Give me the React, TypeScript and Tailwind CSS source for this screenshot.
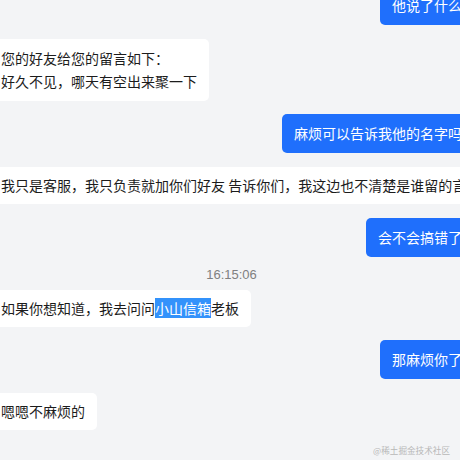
import React from "react";

const font = { fontFamily: '"Noto Sans CJK SC", "Noto Sans", sans-serif' };

function Left({ children, tall }: { children: React.ReactNode; tall?: boolean }) {
  return (
    <div className="flex justify-start">
      <div
        className={`bg-white rounded-[5px] px-3 ${tall ? "py-[8px]" : "py-[7px]"} text-[14px] leading-[23px] text-[#1c1c1c] whitespace-nowrap`}
      >
        {children}
      </div>
    </div>
  );
}

function Right({ children }: { children: React.ReactNode }) {
  return (
    <div className="flex justify-end">
      <div className="bg-[#1f6ffc] rounded-[5px] px-3 py-[8px] text-[14px] leading-[23px] text-white whitespace-nowrap">
        {children}
      </div>
    </div>
  );
}

export default function App() {
  return (
    <div className="relative w-[460px] h-[460px] overflow-hidden bg-[#f3f4f6]" style={font}>
      <div className="flex flex-col w-[485px] ml-[-11px] mt-[-14px]">
        <Right>他说了什么</Right>
        <div className="mt-[14px]">
          <Left tall>
            <div>您的好友给您的留言如下：</div>
            <div>好久不见，哪天有空出来聚一下</div>
          </Left>
        </div>
        <div className="mt-[13px]">
          <Right>麻烦可以告诉我他的名字吗</Right>
        </div>
        <div className="mt-[14px]">
          <Left>我只是客服，我只负责就加你们好友 告诉你们，我这边也不清楚是谁留的言</Left>
        </div>
        <div className="mt-[14px]">
          <Right>会不会搞错了</Right>
        </div>
        <div
          className="mt-[8px] text-center text-[13px] leading-[20px] text-[#808080]"
          style={{ fontFamily: '"Liberation Sans", Arial, sans-serif' }}
        >
          16:15:06
        </div>
        <div className="mt-[5px]">
          <Left>
            如果你想知道，我去问问<span className="bg-[#3392fb] text-white">小山信箱</span>老板
          </Left>
        </div>
        <div className="mt-[13px]">
          <Right>那麻烦你了</Right>
        </div>
        <div className="mt-[14px]">
          <Left>嗯嗯不麻烦的</Left>
        </div>
      </div>
      <div
        className="absolute right-[10px] bottom-[4px] text-[8.6px] leading-[12px] text-[#b8b8b8]"
        style={{ fontFamily: '"Noto Sans CJK SC", serif' }}
      >
        @稀土掘金技术社区
      </div>
    </div>
  );
}
